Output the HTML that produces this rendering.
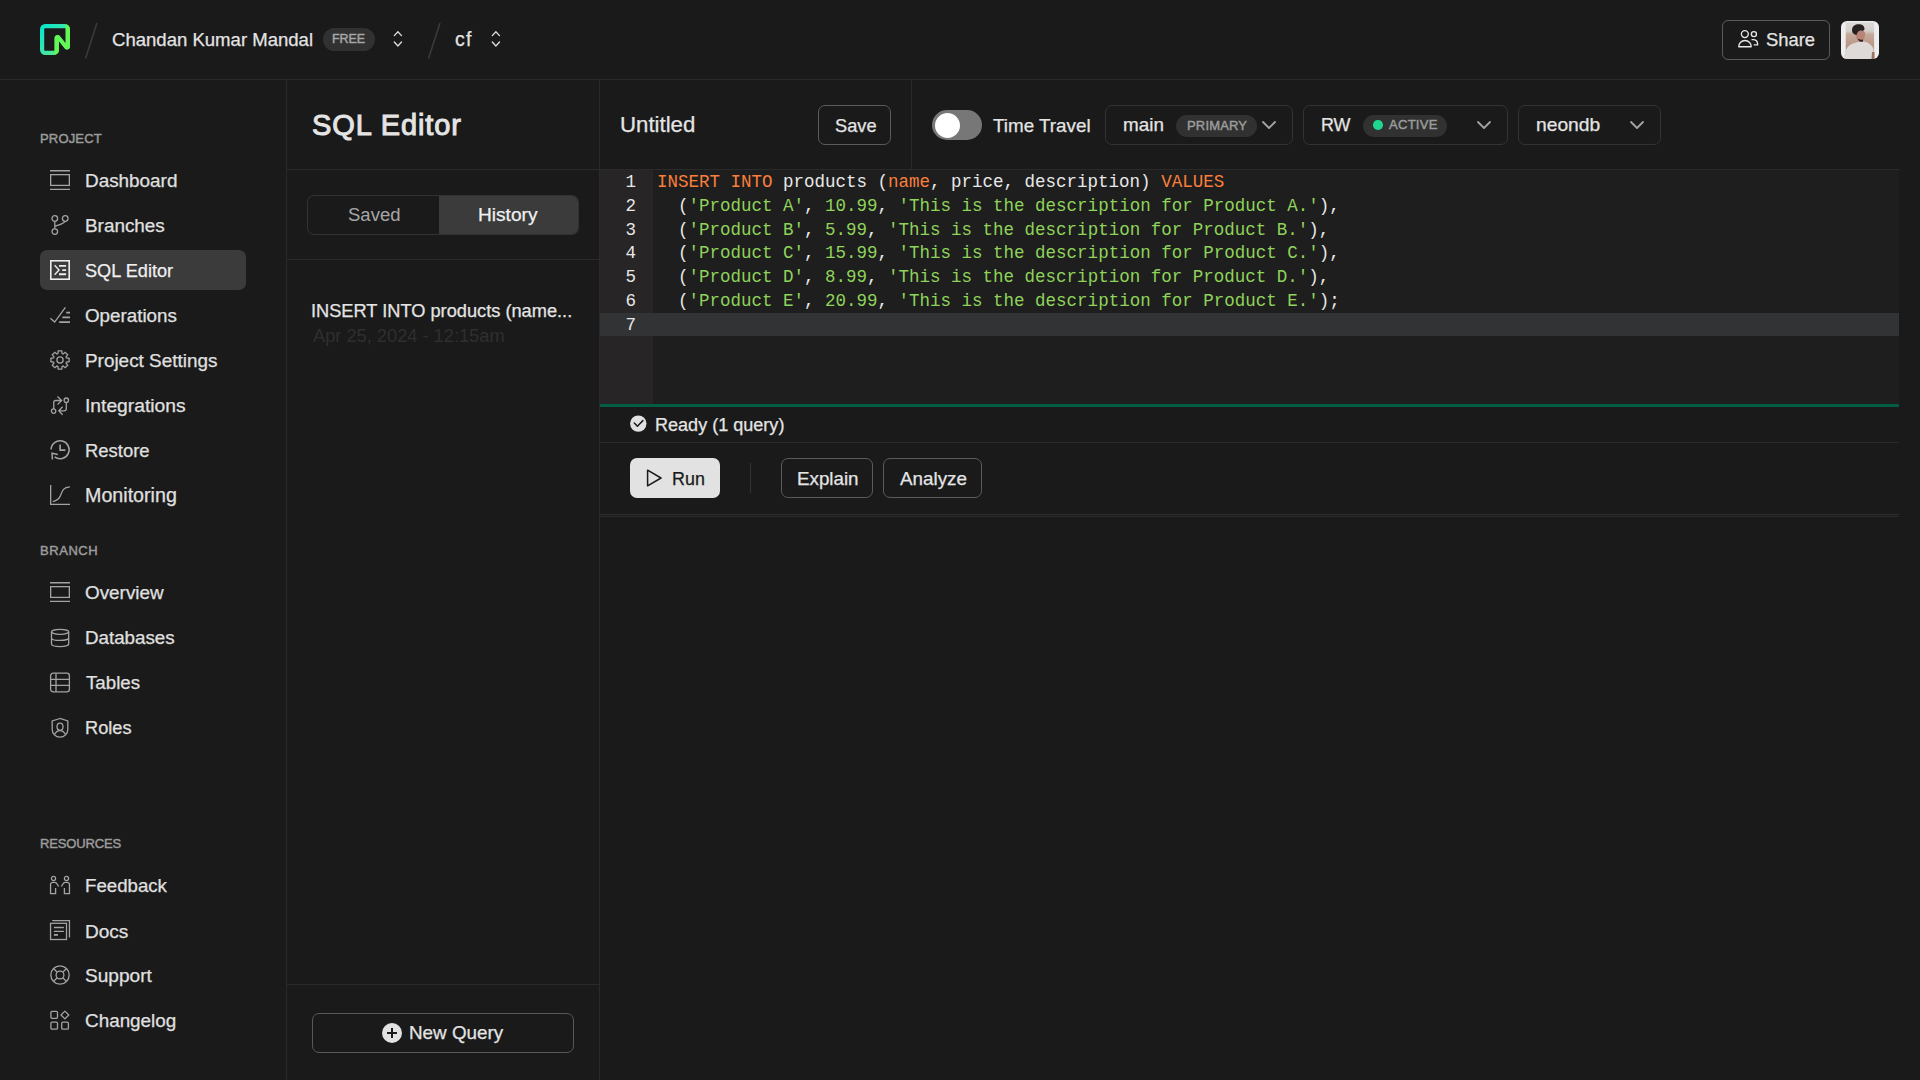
<!DOCTYPE html>
<html><head><meta charset="utf-8"><style>*{box-sizing:border-box;margin:0;padding:0}
html,body{width:1920px;height:1080px;overflow:hidden;background:#1a1a1a;font-family:"Liberation Sans",sans-serif;color:#e4e4e4}
.abs{position:absolute}
svg{position:absolute;overflow:visible}
.t{position:absolute;white-space:nowrap;line-height:1;-webkit-text-stroke:0.25px currentColor}
.code{position:absolute;left:657px;font-family:"Liberation Mono",monospace;font-size:17.5px;white-space:pre;line-height:23.8px;color:#e8e8e8}
.k{color:#fb7f3b}.s{color:#8fd35a}
.ln{position:absolute;left:600px;width:36px;text-align:right;font-family:"Liberation Mono",monospace;font-size:17.5px;line-height:23.8px;color:#e8e8e8}
</style></head><body>
<div class="abs" style="left:0px;top:79px;width:1920px;height:1px;background:#2a2a2a;border-radius:0px;"></div>
<svg style="left:40px;top:24px" width="30" height="31" viewBox="0 0 30 31" ><defs><linearGradient id="lg" x1="0" y1="0" x2="1" y2="1"><stop offset="0" stop-color="#00e6d2"/><stop offset="0.55" stop-color="#3ee6a8"/><stop offset="1" stop-color="#63f655"/></linearGradient></defs>
<path fill="url(#lg)" fill-rule="evenodd" d="M0 5.2A5.2 5.2 0 0 1 5.2 0h19.6A5.2 5.2 0 0 1 30 5.2v17.2c0 2.9-3.6 4.2-5.4 1.9l-5.7-7.3v9A4.9 4.9 0 0 1 14 31H5.2A5.2 5.2 0 0 1 0 25.8V5.2Zm5.2-1c-.6 0-1 .4-1 1v20.6c0 .6.4 1 1 1h9.2c.3 0 .3-.2.3-.5V14.2c0-2.9 3.6-4.2 5.4-1.9l5.7 7.3V5.2c0-.6 0-1-.5-1H5.2Z"/>
<path fill="#63f655" d="M24.8 0A5.2 5.2 0 0 1 30 5.2v17.2c0 2.9-3.6 4.2-5.4 1.9l-5.7-7.3v9A4.9 4.9 0 0 1 14 31a.5.5 0 0 0 .5-.5V14.2c0-2.9 3.6-4.2 5.4-1.9l5.7 7.3V1c0-.6-.4-1-.8-1Z"/></svg>
<svg style="left:80px;top:20px" width="24" height="42" viewBox="0 0 24 42" ><line x1="17" y1="3" x2="5.5" y2="38.6" stroke="#3a3a3a" stroke-width="1.6"/></svg>
<div class="t" style="left:112.00px;top:31.00px;font-size:18.560px;color:#e4e4e4;font-weight:normal;letter-spacing:0.000px;">Chandan Kumar Mandal</div>
<div class="abs" style="left:323px;top:28px;width:52px;height:23px;background:#313131;border-radius:11.5px;"></div>
<div class="t" style="left:332.00px;top:33.00px;font-size:12.500px;color:#a6a6a6;font-weight:normal;letter-spacing:-0.115px;-webkit-text-stroke:0.45px #a6a6a6">FREE</div>
<svg style="left:393px;top:31px" width="10" height="16" viewBox="0 0 10 16" ><path d="M1.3 4.6L4.9 0.7L8.5 4.6M1.3 11L4.9 15L8.5 11" fill="none" stroke="#dadada" stroke-width="1.4" stroke-linecap="round" stroke-linejoin="miter"/></svg>
<svg style="left:423px;top:20px" width="24" height="42" viewBox="0 0 24 42" ><line x1="17" y1="3" x2="5.5" y2="38.6" stroke="#3a3a3a" stroke-width="1.6"/></svg>
<div class="t" style="left:455.00px;top:30.00px;font-size:19.500px;color:#e4e4e4;font-weight:normal;letter-spacing:1.178px;">cf</div>
<svg style="left:490.5px;top:31px" width="10" height="16" viewBox="0 0 10 16" ><path d="M1.3 4.6L4.9 0.7L8.5 4.6M1.3 11L4.9 15L8.5 11" fill="none" stroke="#dadada" stroke-width="1.4" stroke-linecap="round" stroke-linejoin="miter"/></svg>
<div class="abs" style="left:1722px;top:20px;width:108px;height:40px;background:transparent;border:1px solid #5a5a5a;border-radius:6px;"></div>
<svg style="left:1738px;top:30.2px" width="21" height="18" viewBox="0 0 21 18" ><g fill="none" stroke="#e8e8e8" stroke-width="1.35" stroke-linejoin="round"><circle cx="6.86" cy="4.1" r="3.45"/><path d="M0.75 16.75A6.2 6.2 0 0 1 13.2 16.75Z"/><circle cx="15.9" cy="4.1" r="2.55"/><path d="M13.5 9.55H15.4A4.2 4.2 0 0 1 19.6 13.75V14.9H15.7"/></g></svg>
<div class="t" style="left:1766.00px;top:31.00px;font-size:18.409px;color:#e4e4e4;font-weight:normal;letter-spacing:0.000px;">Share</div>
<svg style="left:1841px;top:21px" width="38" height="38" viewBox="0 0 38 38" ><defs><clipPath id="av"><rect width="38" height="38" rx="6"/></clipPath>
<linearGradient id="avbg" x1="0" y1="0" x2="0" y2="1"><stop offset="0" stop-color="#dcdad8"/><stop offset="0.22" stop-color="#d6d0cc"/><stop offset="0.32" stop-color="#c4aa9c"/><stop offset="0.7" stop-color="#b89080"/><stop offset="1" stop-color="#8a6a60"/></linearGradient>
<filter id="avb"><feGaussianBlur stdDeviation="0.6"/></filter></defs>
<g clip-path="url(#av)"><rect width="38" height="38" fill="#eeeeee"/><rect x="4.7" y="1.3" width="28.4" height="38" fill="url(#avbg)"/>
<g filter="url(#avb)">
<path d="M3 38C3 30 6 25 12 22.5L17 21L23 20.5C28 21.5 31 24 32.5 28L33 38Z" fill="#dedad8"/>
<path d="M31 31L33.5 31V38H30.5Z" fill="#a07060"/>
<path d="M14.5 11C14.5 16 16 20 19.5 20.5C22.5 20.5 24 17 24 13C24 10 22 9 19 9S14.5 9.5 14.5 11Z" fill="#b88474"/>
<path d="M16.5 17.5C17.5 20 19.5 21.5 22 20.5L22 18.5C20 19 18 18.5 16.5 17.5Z" fill="#2e2226"/>
<path d="M11 9.5C11 5 14 3.3 18 3.3C22 3.3 23.5 5.5 23.5 8.5L22 10C20 9 18 9.5 16.5 11.5L15.5 14C13 13.5 11 12 11 9.5Z" fill="#262024"/>
</g></g></svg>
<div class="abs" style="left:286px;top:80px;width:1px;height:1000px;background:#2a2a2a;border-radius:0px;"></div>
<div class="t" style="left:40.00px;top:132.00px;font-size:13.000px;color:#9c9c9c;font-weight:normal;letter-spacing:0.159px;-webkit-text-stroke:0.45px #9c9c9c">PROJECT</div>
<div class="t" style="left:40.00px;top:544.00px;font-size:13.000px;color:#9c9c9c;font-weight:normal;letter-spacing:0.555px;-webkit-text-stroke:0.45px #9c9c9c">BRANCH</div>
<div class="t" style="left:40.00px;top:837.00px;font-size:13.000px;color:#9c9c9c;font-weight:normal;letter-spacing:-0.154px;-webkit-text-stroke:0.45px #9c9c9c">RESOURCES</div>
<div class="abs" style="left:40px;top:250px;width:206px;height:40px;background:#3b3b3b;border-radius:7px;"></div>
<svg style="left:50px;top:170px" width="20" height="20" viewBox="0 0 20 20" ><g fill="none" stroke="#a3a3a3" stroke-width="1.3" stroke-linecap="butt" stroke-linejoin="miter"><path d="M0 0.75H20M0 19.4H20"/><rect x="0.65" y="4.65" width="18.7" height="10.75"/></g></svg>
<div class="t" style="left:85.00px;top:172.00px;font-size:18.903px;color:#e0e0e0;font-weight:normal;letter-spacing:0.000px;">Dashboard</div>
<svg style="left:50px;top:215px" width="20" height="20" viewBox="0 0 20 20" ><g fill="none" stroke="#a3a3a3" stroke-width="1.3" stroke-linecap="butt" stroke-linejoin="miter"><circle cx="4.8" cy="3.5" r="2.8"/><circle cx="15.2" cy="3.5" r="2.8"/><circle cx="4.8" cy="16.6" r="2.8"/><path d="M4.8 6.3V13.8M4.8 11.3C8 10 13.8 9 15 6.2"/></g></svg>
<div class="t" style="left:85.00px;top:217.00px;font-size:18.904px;color:#e0e0e0;font-weight:normal;letter-spacing:0.000px;">Branches</div>
<svg style="left:50px;top:260px" width="20" height="20" viewBox="0 0 20 20" ><g fill="none" stroke="#ececec" stroke-width="1.3" stroke-linecap="butt" stroke-linejoin="miter"><rect x="0.8" y="0.8" width="18.4" height="18.4" stroke-width="1.6"/><path d="M4.6 5.2L9 10L4.6 14.8" stroke-width="1.4"/><path d="M9 5.95H16.1M12.3 10.1H16.1M9 14.25H16.1" stroke-width="1.8"/></g></svg>
<div class="t" style="left:85.00px;top:262.00px;font-size:18.167px;color:#f0f0f0;font-weight:normal;letter-spacing:0.000px;">SQL Editor</div>
<svg style="left:50px;top:305px" width="20" height="20" viewBox="0 0 20 20" ><g fill="none" stroke="#a3a3a3" stroke-width="1.3" stroke-linecap="butt" stroke-linejoin="miter"><path d="M0.4 13.2L4.65 17.1L15.4 2.3"/><path d="M16.2 7.6H20M12.3 12.4H20M9.2 17.1H20" stroke-width="1.6"/></g></svg>
<div class="t" style="left:85.00px;top:307.00px;font-size:18.798px;color:#e0e0e0;font-weight:normal;letter-spacing:0.000px;">Operations</div>
<svg style="left:50px;top:350px" width="20" height="20" viewBox="0 0 20 20" ><g fill="none" stroke="#a3a3a3" stroke-width="1.3" stroke-linecap="butt" stroke-linejoin="miter"><path d="M8.23 0.87L11.77 0.87L12.10 3.53L13.09 3.94L15.20 2.29L17.71 4.80L16.06 6.91L16.47 7.90L19.13 8.23L19.13 11.77L16.47 12.10L16.06 13.09L17.71 15.20L15.20 17.71L13.09 16.06L12.10 16.47L11.77 19.13L8.23 19.13L7.90 16.47L6.91 16.06L4.80 17.71L2.29 15.20L3.94 13.09L3.53 12.10L0.87 11.77L0.87 8.23L3.53 7.90L3.94 6.91L2.29 4.80L4.80 2.29L6.91 3.94L7.90 3.53Z"/><circle cx="10" cy="10" r="3.1"/></g></svg>
<div class="t" style="left:85.00px;top:352.00px;font-size:18.923px;color:#e0e0e0;font-weight:normal;letter-spacing:0.000px;">Project Settings</div>
<svg style="left:50px;top:395px" width="20" height="20" viewBox="0 0 20 20" ><g fill="none" stroke="#a3a3a3" stroke-width="1.3" stroke-linecap="butt" stroke-linejoin="miter"><circle cx="3.6" cy="16.1" r="2.2"/><circle cx="16.3" cy="5.2" r="2.2"/><path d="M3.75 13.9V7.6Q3.75 5.5 5.8 5.5H11.4M7.5 1.5L11.6 5.55L7.5 9.6"/><path d="M16.3 7.4V13.6Q16.3 15.8 14.1 15.8H9M12.6 11.7L8.8 15.8L12.6 19.7"/></g></svg>
<div class="t" style="left:85.00px;top:396.00px;font-size:19.257px;color:#e0e0e0;font-weight:normal;letter-spacing:0.000px;">Integrations</div>
<svg style="left:50px;top:440px" width="20" height="20" viewBox="0 0 20 20" ><g fill="none" stroke="#a3a3a3" stroke-width="1.3" stroke-linecap="butt" stroke-linejoin="miter"><path d="M1.1 9.6A9 9 0 1 1 4.6 16.9" stroke-width="1.5"/><path d="M7.8 14.6L2 13.3L2.4 19.5" stroke-width="1.5"/><path d="M10.1 4.5V10.1H15.4" stroke-width="1.6"/></g></svg>
<div class="t" style="left:85.00px;top:442.00px;font-size:18.441px;color:#e0e0e0;font-weight:normal;letter-spacing:0.000px;">Restore</div>
<svg style="left:50px;top:485px" width="20" height="20" viewBox="0 0 20 20" ><g fill="none" stroke="#a3a3a3" stroke-width="1.3" stroke-linecap="butt" stroke-linejoin="miter"><path d="M0.65 0.1V19.35H20"/><path d="M2.8 16.6C6 15.4 8.5 15.6 10.5 10.5C12.4 5.2 13.5 2.3 19.9 1.9"/></g></svg>
<div class="t" style="left:85.00px;top:486.00px;font-size:19.688px;color:#e0e0e0;font-weight:normal;letter-spacing:0.000px;">Monitoring</div>
<svg style="left:50px;top:582px" width="20" height="20" viewBox="0 0 20 20" ><g fill="none" stroke="#a3a3a3" stroke-width="1.3" stroke-linecap="butt" stroke-linejoin="miter"><path d="M0 0.75H20M0 19.4H20"/><rect x="0.65" y="4.65" width="18.7" height="10.75"/></g></svg>
<div class="t" style="left:85.00px;top:584.00px;font-size:18.898px;color:#e0e0e0;font-weight:normal;letter-spacing:0.000px;">Overview</div>
<svg style="left:50px;top:627px" width="20" height="20" viewBox="0 0 20 20" ><g fill="none" stroke="#a3a3a3" stroke-width="1.3" stroke-linecap="butt" stroke-linejoin="miter"><ellipse cx="10.1" cy="4.8" rx="8.6" ry="2.5"/><path d="M1.5 4.8V17.1C1.5 18.5 5.3 19.6 10.1 19.6S18.7 18.5 18.7 17.1V4.8M1.5 10.9C1.5 12.3 5.3 13.4 10.1 13.4S18.7 12.3 18.7 10.9"/></g></svg>
<div class="t" style="left:85.00px;top:629.00px;font-size:18.769px;color:#e0e0e0;font-weight:normal;letter-spacing:0.000px;">Databases</div>
<svg style="left:50px;top:672px" width="20" height="20" viewBox="0 0 20 20" ><g fill="none" stroke="#a3a3a3" stroke-width="1.3" stroke-linecap="butt" stroke-linejoin="miter"><rect x="0.6" y="1.2" width="18.8" height="18.6" rx="2.6"/><path d="M0.6 7.4H19.4M0.6 13.4H19.4M6 1.2V19.8"/></g></svg>
<div class="t" style="left:86.00px;top:674.00px;font-size:18.704px;color:#e0e0e0;font-weight:normal;letter-spacing:0.000px;">Tables</div>
<svg style="left:50px;top:717px" width="20" height="20" viewBox="0 0 20 20" ><g fill="none" stroke="#a3a3a3" stroke-width="1.3" stroke-linecap="butt" stroke-linejoin="miter"><path d="M10 1.5L2.2 3.9V12.5C2.2 16.6 5.5 20.2 10 20.2S17.8 16.6 17.8 12.5V3.9Z"/><ellipse cx="10" cy="9.7" rx="3" ry="3.6"/><path d="M4.6 17.6C5.8 14.8 7.7 13.6 10 13.6S14.2 14.8 15.4 17.6"/></g></svg>
<div class="t" style="left:85.00px;top:719.00px;font-size:18.212px;color:#e0e0e0;font-weight:normal;letter-spacing:0.000px;">Roles</div>
<svg style="left:50px;top:875px" width="20" height="20" viewBox="0 0 20 20" ><g fill="none" stroke="#a3a3a3" stroke-width="1.3" stroke-linecap="butt" stroke-linejoin="miter"><circle cx="3.5" cy="3.5" r="2.1"/><circle cx="16.5" cy="3.5" r="2.1"/><path d="M5.6 13.1V18.55H0.55V9.4Q0.55 7.3 3 7.3H4.5Q5.5 7.3 6.3 8L8.7 11.5"/><path d="M14.4 13.1V18.55H19.45V9.4Q19.45 7.3 17 7.3H15.5Q14.5 7.3 13.7 8L11.3 11.5"/></g></svg>
<div class="t" style="left:85.00px;top:877.00px;font-size:18.661px;color:#e0e0e0;font-weight:normal;letter-spacing:0.000px;">Feedback</div>
<svg style="left:50px;top:920px" width="20" height="20" viewBox="0 0 20 20" ><g fill="none" stroke="#a3a3a3" stroke-width="1.3" stroke-linecap="butt" stroke-linejoin="miter"><path d="M2.2 0.55H19.45V17.5"/><rect x="0.55" y="3.3" width="15.95" height="16.2"/><path d="M3.9 7.5H13.9M3.9 11.3H13.9"/><path d="M3.9 14.9H7.9" stroke-width="1.8"/></g></svg>
<div class="t" style="left:85.00px;top:922.00px;font-size:19.037px;color:#e0e0e0;font-weight:normal;letter-spacing:0.000px;">Docs</div>
<svg style="left:50px;top:965px" width="20" height="20" viewBox="0 0 20 20" ><g fill="none" stroke="#a3a3a3" stroke-width="1.3" stroke-linecap="butt" stroke-linejoin="miter"><circle cx="10" cy="10" r="9.2"/><circle cx="10" cy="10" r="3.9"/><path d="M3.5 3.5L7.2 7.2M16.5 3.5L12.8 7.2M3.5 16.5L7.2 12.8M16.5 16.5L12.8 12.8"/></g></svg>
<div class="t" style="left:85.00px;top:966.00px;font-size:19.097px;color:#e0e0e0;font-weight:normal;letter-spacing:0.000px;">Support</div>
<svg style="left:50px;top:1010px" width="20" height="20" viewBox="0 0 20 20" ><g fill="none" stroke="#a3a3a3" stroke-width="1.3" stroke-linecap="butt" stroke-linejoin="miter"><rect x="0.9" y="1.4" width="6.6" height="6.9" rx="1.2"/><path d="M14.9 1.1L18.8 5L14.9 8.9L11 5Z" stroke-linejoin="round"/><rect x="0.9" y="12.1" width="6.6" height="7" rx="1.2"/><rect x="11.7" y="12.1" width="6.7" height="7" rx="1.2"/></g></svg>
<div class="t" style="left:85.00px;top:1012.00px;font-size:18.890px;color:#e0e0e0;font-weight:normal;letter-spacing:0.000px;">Changelog</div>
<div class="abs" style="left:599px;top:80px;width:1px;height:1000px;background:#2a2a2a;border-radius:0px;"></div>
<div class="t" style="left:312.00px;top:111.00px;font-size:29.000px;color:#e4e4e4;font-weight:normal;letter-spacing:0.909px;-webkit-text-stroke:1.0px #e4e4e4">SQL Editor</div>
<div class="abs" style="left:287px;top:169px;width:312px;height:1px;background:#2a2a2a;border-radius:0px;"></div>
<div class="abs" style="left:307px;top:195px;width:272px;height:40px;background:transparent;border:1px solid #333333;border-radius:7px;"></div>
<div class="abs" style="left:439px;top:196px;width:139px;height:38px;background:#3b3b3b;border-radius:0px;border-radius:0 6px 6px 0;"></div>
<div class="t" style="left:348.00px;top:206.00px;font-size:18.523px;color:#a6a6a6;font-weight:normal;letter-spacing:0.000px;-webkit-text-stroke:0.05px #a6a6a6">Saved</div>
<div class="t" style="left:478.00px;top:205.00px;font-size:19.143px;color:#f0f0f0;font-weight:normal;letter-spacing:0.000px;">History</div>
<div class="abs" style="left:287px;top:259px;width:312px;height:1px;background:#2a2a2a;border-radius:0px;"></div>
<div class="t" style="left:311.00px;top:302.00px;font-size:18.229px;color:#e4e4e4;font-weight:normal;letter-spacing:0.000px;">INSERT INTO products (name...</div>
<div class="t" style="left:313.00px;top:327.00px;font-size:18.244px;color:#2f2f2f;font-weight:normal;letter-spacing:0.000px;-webkit-text-stroke:0">Apr 25, 2024 - 12:15am</div>
<div class="abs" style="left:287px;top:984px;width:312px;height:1px;background:#2a2a2a;border-radius:0px;"></div>
<div class="abs" style="left:312px;top:1013px;width:262px;height:40px;background:transparent;border:1px solid #585858;border-radius:7px;"></div>
<svg style="left:382px;top:1023px" width="20" height="20" viewBox="0 0 20 20" ><circle cx="10" cy="10" r="10" fill="#e2e2e2"/><path d="M10 5V15M5 10H15" stroke="#1a1a1a" stroke-width="2"/></svg>
<div class="t" style="left:409.00px;top:1024.00px;font-size:18.837px;color:#e4e4e4;font-weight:normal;letter-spacing:0.000px;">New Query</div>
<div class="t" style="left:620.00px;top:114.00px;font-size:22.233px;color:#e4e4e4;font-weight:normal;letter-spacing:0.000px;">Untitled</div>
<div class="abs" style="left:818px;top:105px;width:73px;height:40px;background:transparent;border:1px solid #5a5a5a;border-radius:7px;"></div>
<div class="t" style="left:835.00px;top:117.00px;font-size:18.245px;color:#e4e4e4;font-weight:normal;letter-spacing:0.000px;">Save</div>
<div class="abs" style="left:911px;top:80px;width:1px;height:89px;background:#2a2a2a;border-radius:0px;"></div>
<div class="abs" style="left:932px;top:110px;width:50px;height:30px;background:#777777;border-radius:15px;"></div>
<div class="abs" style="left:935px;top:112.5px;width:25px;height:25px;border-radius:50%;background:#ffffff"></div>
<div class="t" style="left:993.00px;top:117.00px;font-size:18.846px;color:#e4e4e4;font-weight:normal;letter-spacing:0.000px;">Time Travel</div>
<div class="abs" style="left:1105px;top:105px;width:188px;height:40px;background:transparent;border:1px solid #333333;border-radius:7px;"></div>
<div class="t" style="left:1123.00px;top:116.00px;font-size:18.864px;color:#e4e4e4;font-weight:normal;letter-spacing:0.000px;">main</div>
<div class="abs" style="left:1176px;top:115px;width:81px;height:22px;background:#313131;border-radius:11px;"></div>
<div class="t" style="left:1187.00px;top:119.00px;font-size:13.000px;color:#9c9c9c;font-weight:normal;letter-spacing:0.161px;-webkit-text-stroke:0.45px #9c9c9c">PRIMARY</div>
<svg style="left:1262px;top:121px" width="14" height="8" viewBox="0 0 14 8" ><path d="M1 1L7 7L13 1" fill="none" stroke="#a3a3a3" stroke-width="1.8" stroke-linecap="round" stroke-linejoin="round"/></svg>
<div class="abs" style="left:1303px;top:105px;width:205px;height:40px;background:transparent;border:1px solid #333333;border-radius:7px;"></div>
<div class="t" style="left:1321.00px;top:117.00px;font-size:17.884px;color:#e4e4e4;font-weight:normal;letter-spacing:0.000px;">RW</div>
<div class="abs" style="left:1363px;top:115px;width:84px;height:22px;background:#313131;border-radius:11px;"></div>
<div class="abs" style="left:1373.3px;top:120px;width:9.5px;height:9.5px;border-radius:50%;background:#1ed68f"></div>
<div class="t" style="left:1389.00px;top:118.00px;font-size:13.000px;color:#9c9c9c;font-weight:normal;letter-spacing:0.287px;-webkit-text-stroke:0.45px #9c9c9c">ACTIVE</div>
<svg style="left:1477px;top:121px" width="14" height="8" viewBox="0 0 14 8" ><path d="M1 1L7 7L13 1" fill="none" stroke="#a3a3a3" stroke-width="1.8" stroke-linecap="round" stroke-linejoin="round"/></svg>
<div class="abs" style="left:1518px;top:105px;width:143px;height:40px;background:transparent;border:1px solid #333333;border-radius:7px;"></div>
<div class="t" style="left:1536.00px;top:115.00px;font-size:19.241px;color:#e4e4e4;font-weight:normal;letter-spacing:0.000px;">neondb</div>
<svg style="left:1630px;top:121px" width="14" height="8" viewBox="0 0 14 8" ><path d="M1 1L7 7L13 1" fill="none" stroke="#a3a3a3" stroke-width="1.8" stroke-linecap="round" stroke-linejoin="round"/></svg>
<div class="abs" style="left:599px;top:169px;width:1300px;height:1px;background:#2a2a2a;border-radius:0px;"></div>
<div class="abs" style="left:600px;top:170px;width:1299px;height:234px;background:#1e1e1e;border-radius:0px;"></div>
<div class="abs" style="left:600px;top:170px;width:53px;height:234px;background:#272526;border-radius:0px;"></div>
<div class="abs" style="left:600px;top:313px;width:1299px;height:22.7px;background:#323335;border-radius:0px;"></div>
<div class="code" style="top:171px"><span class="k">INSERT INTO</span> products (<span class="k">name</span>, price, description) <span class="k">VALUES</span>
  (<span class="s">'Product A'</span>, <span class="s">10.99</span>, <span class="s">'This is the description for Product A.'</span>),
  (<span class="s">'Product B'</span>, <span class="s">5.99</span>, <span class="s">'This is the description for Product B.'</span>),
  (<span class="s">'Product C'</span>, <span class="s">15.99</span>, <span class="s">'This is the description for Product C.'</span>),
  (<span class="s">'Product D'</span>, <span class="s">8.99</span>, <span class="s">'This is the description for Product D.'</span>),
  (<span class="s">'Product E'</span>, <span class="s">20.99</span>, <span class="s">'This is the description for Product E.'</span>);</div>
<div class="ln" style="top:171px">1<br>2<br>3<br>4<br>5<br>6<br>7</div>
<div class="abs" style="left:600px;top:404px;width:1299px;height:2.5px;background:#015e45;border-radius:0px;"></div>
<svg style="left:630px;top:415px" width="17" height="17" viewBox="0 0 17 17" ><circle cx="8.3" cy="8.6" r="8.2" fill="#e0e0e0"/><path d="M4.3 8L7.4 11.2L12.9 5.6" fill="none" stroke="#1a1a1a" stroke-width="1.5" stroke-linecap="round" stroke-linejoin="round"/></svg>
<div class="t" style="left:655.00px;top:416.00px;font-size:18.060px;color:#e4e4e4;font-weight:normal;letter-spacing:0.000px;">Ready (1 query)</div>
<div class="abs" style="left:600px;top:442px;width:1299px;height:1px;background:#2a2a2a;border-radius:0px;"></div>
<div class="abs" style="left:630px;top:458px;width:90px;height:40px;background:#e2e2e2;border-radius:7px;"></div>
<svg style="left:646px;top:469px" width="17" height="18" viewBox="0 0 17 18" ><path d="M1.6 1.2L15 9L1.6 16.8Z" fill="none" stroke="#1a1a1a" stroke-width="1.5" stroke-linejoin="round"/></svg>
<div class="t" style="left:672.00px;top:471.00px;font-size:17.911px;color:#1a1a1a;font-weight:normal;letter-spacing:0.000px;">Run</div>
<div class="abs" style="left:750px;top:463px;width:1px;height:30px;background:#333333;border-radius:0px;"></div>
<div class="abs" style="left:781px;top:458px;width:92px;height:40px;background:transparent;border:1px solid #5a5a5a;border-radius:7px;"></div>
<div class="t" style="left:797.00px;top:470.00px;font-size:18.771px;color:#e4e4e4;font-weight:normal;letter-spacing:0.000px;">Explain</div>
<div class="abs" style="left:883px;top:458px;width:99px;height:40px;background:transparent;border:1px solid #5a5a5a;border-radius:7px;"></div>
<div class="t" style="left:900.00px;top:470.00px;font-size:18.834px;color:#e4e4e4;font-weight:normal;letter-spacing:0.000px;">Analyze</div>
<div class="abs" style="left:600px;top:514px;width:1299px;height:1px;background:#2c2c2c;border-radius:0px;"></div>
<div class="abs" style="left:600px;top:516px;width:1299px;height:1px;background:#2c2c2c;border-radius:0px;"></div>
</body></html>
